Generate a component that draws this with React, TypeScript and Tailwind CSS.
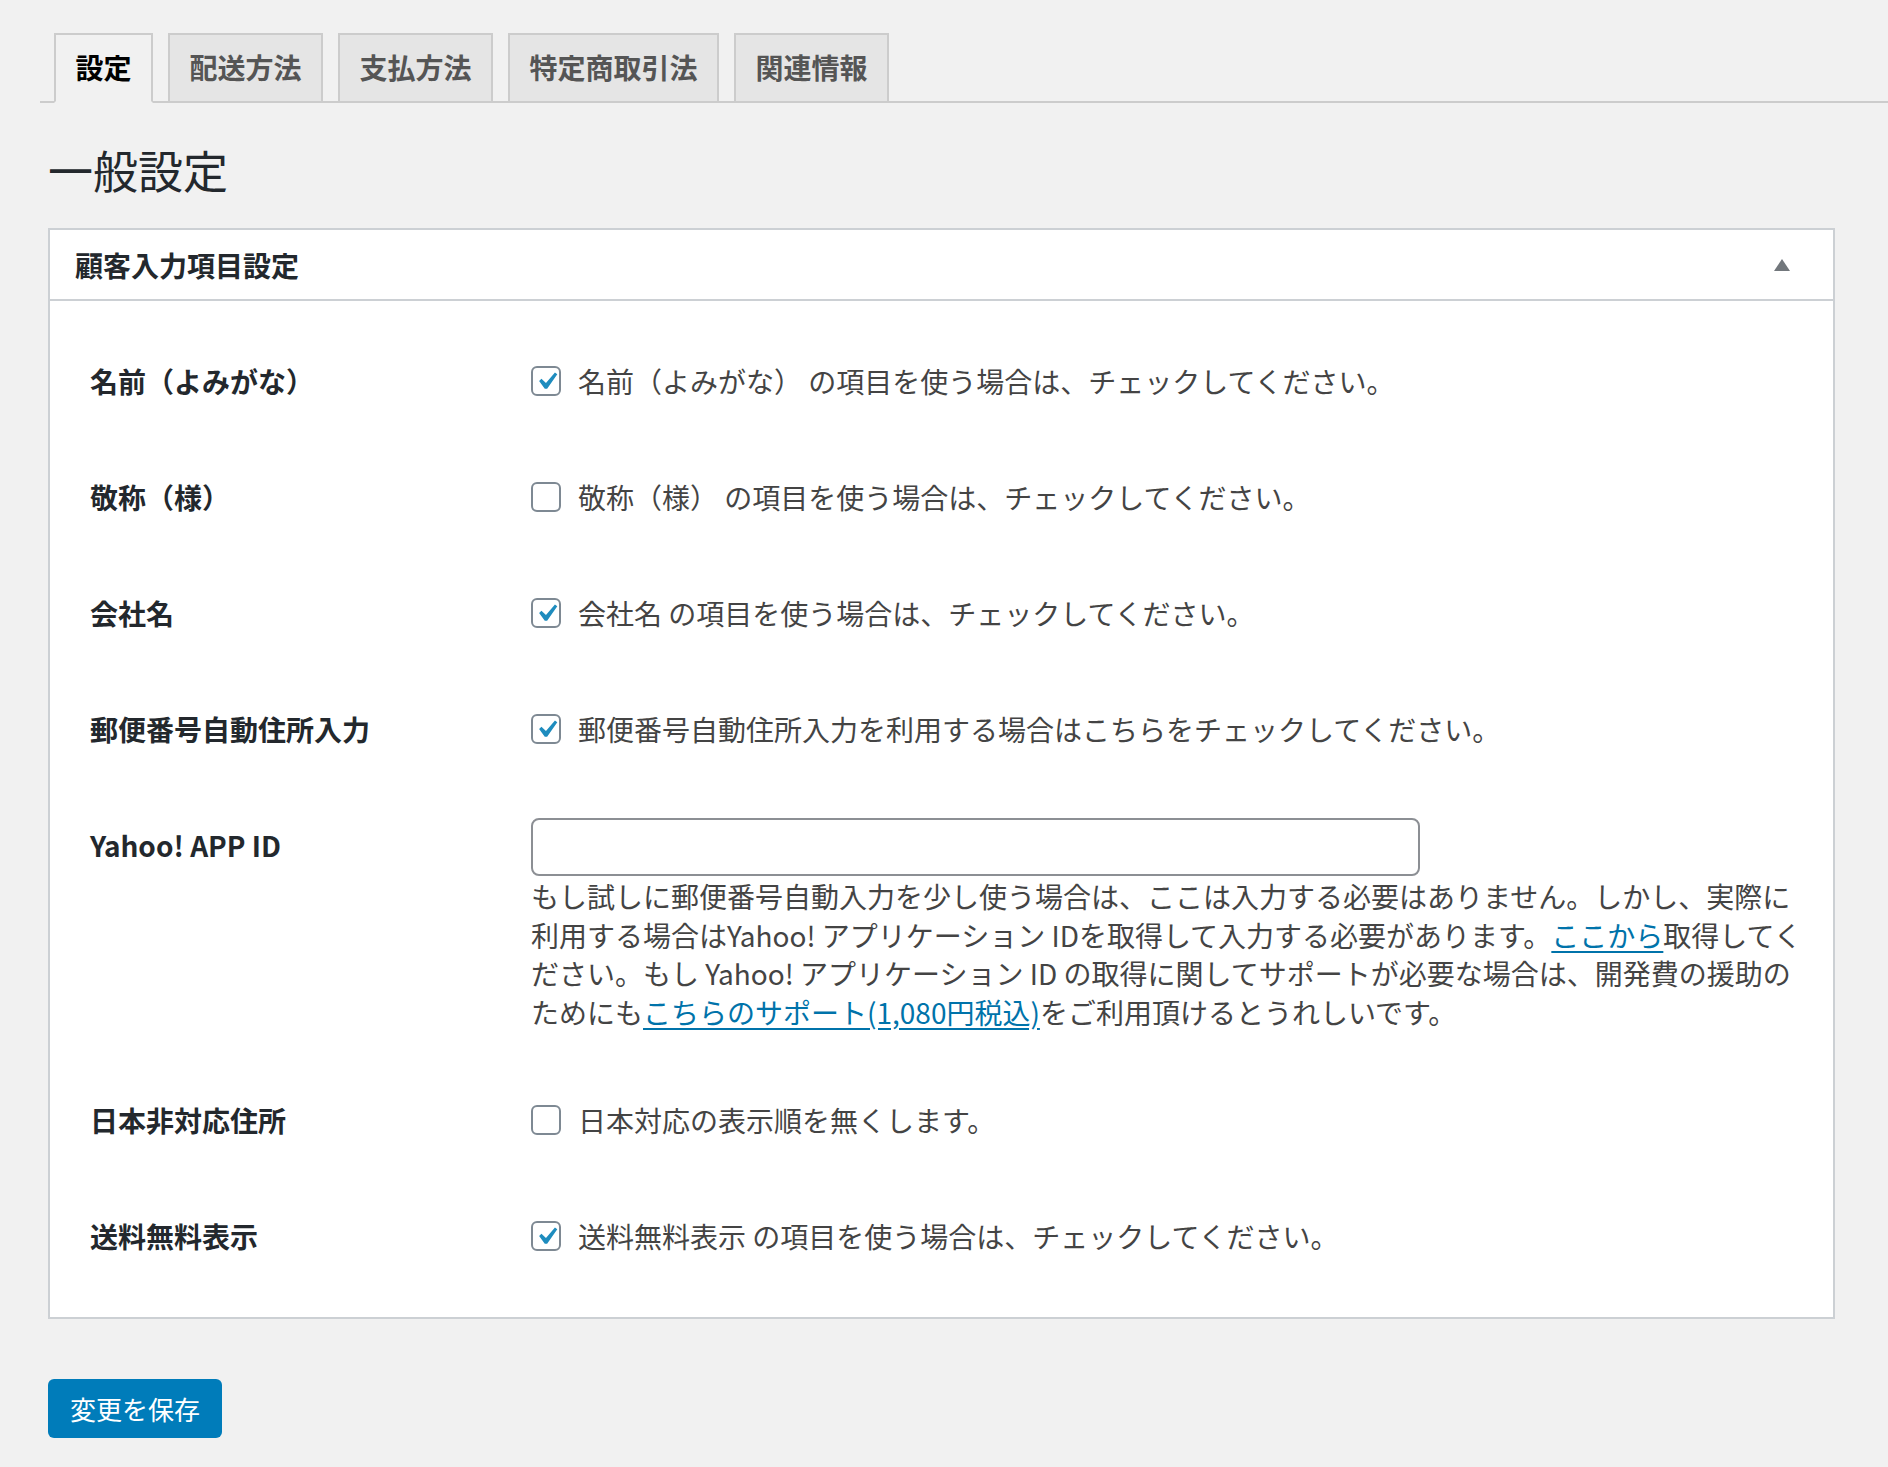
import React from 'react'

const font = { fontFamily: '"Noto Sans CJK JP", "Noto Sans", sans-serif' }

const tabs = ['設定', '配送方法', '支払方法', '特定商取引法', '関連情報']

function Checkbox({ checked }: { checked: boolean }) {
  return (
    <span className="flex h-[30px] w-[30px] shrink-0 items-center justify-center rounded-[6px] border-2 border-[#7e8993] bg-white">
      {checked && (
        <svg viewBox="0 0 20 20" className="h-[35px] w-[35px] shrink-0">
          <path d="M14.83 4.89l1.34.94-5.81 8.38H9.02L5.78 9.67l1.34-1.25 2.57 2.4z" fill="#1e8cbe" />
        </svg>
      )}
    </span>
  )
}

function CheckRow({ label, text, checked }: { label: string; text: string; checked: boolean }) {
  return (
    <div className="flex items-center py-[38px] pl-[40px] leading-[40px]">
      <div className="w-[441px] shrink-0 text-[28px] font-bold text-[#23282d]">{label}</div>
      <label className="flex items-center gap-[17px]">
        <Checkbox checked={checked} />
        <span className="text-[28px] text-[#444]">{text}</span>
      </label>
    </div>
  )
}

export default function App() {
  return (
    <div className="min-h-screen bg-[#f1f1f1] pt-[33px] pb-[30px]" style={font}>
      <div className="ml-[40px] flex border-b-2 border-[#ccc] pl-[14px]">
        {tabs.map((t, i) => (
          <div
            key={t}
            className={
              i === 0
                ? '-mb-[2px] flex h-[70px] items-center border-2 border-[#ccc] border-b-[#f1f1f1] bg-[#f1f1f1] px-[19.5px] pb-[2px] text-[28px] font-bold text-black'
                : '-mb-[2px] ml-[15px] flex h-[70px] items-center border-2 border-[#ccc] bg-[#e5e5e5] px-[19.5px] pb-[2px] text-[28px] font-bold text-[#555]'
            }
          >
            {t}
          </div>
        ))}
      </div>

      <div className="ml-[48px] mr-[53px]">
        <h1 className="mt-[37px] text-[45px] leading-[60px] font-normal text-[#23282d]">一般設定</h1>

        <div className="mt-[28px] border-2 border-[#ccd0d4] bg-white">
          <div className="flex h-[71px] items-center justify-between border-b-2 border-[#ccd0d4] pl-[25px] pr-[43px]">
            <h2 className="text-[28px] font-bold text-[#23282d]">顧客入力項目設定</h2>
            <svg width="16" height="12" viewBox="0 0 16 12">
              <path d="M8 0L16 12H0z" fill="#72777c" />
            </svg>
          </div>

          <div className="pt-[22px] pb-[23px]">
            <CheckRow label="名前（よみがな）" text="名前（よみがな） の項目を使う場合は、チェックしてください。" checked />
            <CheckRow label="敬称（様）" text="敬称（様） の項目を使う場合は、チェックしてください。" checked={false} />
            <CheckRow label="会社名" text="会社名 の項目を使う場合は、チェックしてください。" checked />
            <CheckRow label="郵便番号自動住所入力" text="郵便番号自動住所入力を利用する場合はこちらをチェックしてください。" checked />

            <div className="flex items-start pt-[31px] pb-[31px] pl-[40px]">
              <div className="w-[441px] shrink-0 pt-[7px] text-[28px] font-bold leading-[40px] text-[#23282d]">Yahoo! APP ID</div>
              <div>
                <input type="text" className="h-[58px] w-[889px] rounded-[8px] border-2 border-[#8c8f94] bg-white px-3 outline-none" />
                <p className="mt-[1px] whitespace-nowrap text-[28px] leading-[38.5px] text-[#444]">
                  もし試しに郵便番号自動入力を少し使う場合は、ここは入力する必要はありません。しかし、実際に
                  <br />
                  利用する場合はYahoo! アプリケーション IDを取得して入力する必要があります。
                  <a href="#" className="text-[#0073aa] underline underline-offset-4">ここから</a>
                  取得してく
                  <br />
                  ださい。もし Yahoo! アプリケーション ID の取得に関してサポートが必要な場合は、開発費の援助の
                  <br />
                  ためにも
                  <a href="#" className="text-[#0073aa] underline underline-offset-4">こちらのサポート(1,080円税込)</a>
                  をご利用頂けるとうれしいです。
                </p>
              </div>
            </div>

            <CheckRow label="日本非対応住所" text="日本対応の表示順を無くします。" checked={false} />
            <CheckRow label="送料無料表示" text="送料無料表示 の項目を使う場合は、チェックしてください。" checked />
          </div>
        </div>

        <button className="mt-[60px] flex h-[59px] w-[174px] items-center justify-center rounded-[6px] bg-[#007cba] text-[26px] text-white">
          変更を保存
        </button>
      </div>
    </div>
  )
}
